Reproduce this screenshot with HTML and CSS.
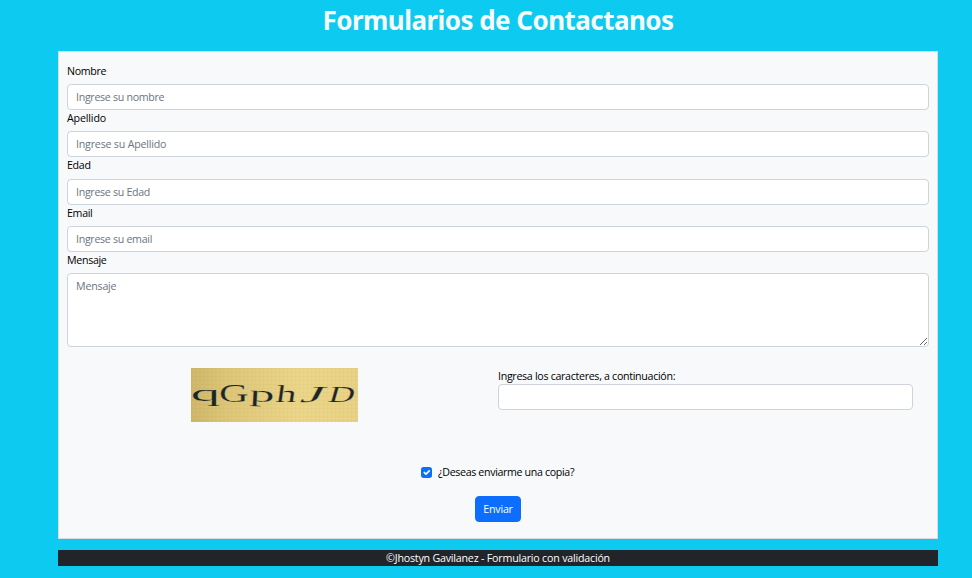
FILE: index.html
```html
<!DOCTYPE html>
<html lang="es">
<head>
<meta charset="utf-8">
<title>Formularios de Contactanos</title>
<link rel="stylesheet" href="styles.css">
</head>
<body>
<main class="container">
  <h1 class="title">Formularios de Contactanos</h1>
  <form class="card">
    <div class="field"><label for="nombre">Nombre</label><input class="control tight" id="nombre" type="text" placeholder="Ingrese su nombre"></div>
    <div class="field"><label for="apellido" class="wide">Apellido</label><input class="control" id="apellido" type="text" placeholder="Ingrese su Apellido"></div>
    <div class="field"><label for="edad">Edad</label><input class="control tight" id="edad" type="text" placeholder="Ingrese su Edad"></div>
    <div class="field"><label for="email">Email</label><input class="control tight" id="email" type="text" placeholder="Ingrese su email"></div>
    <div class="field"><label for="mensaje">Mensaje</label><textarea class="control message" id="mensaje" placeholder="Mensaje"></textarea></div>
    <div class="verify">
      <svg class="captcha" viewBox="0 0 167 54" role="img" aria-label="Captcha">
        <defs>
          <linearGradient id="paper"><stop offset="0" stop-color="#ceb568"/><stop offset=".2" stop-color="#dcc477"/><stop offset=".65" stop-color="#ead589"/><stop offset="1" stop-color="#e8d184"/></linearGradient>
          <pattern id="weave" width="4" height="4" patternUnits="userSpaceOnUse"><path d="M0 .5H4M.5 0V4" stroke="#b89a4c" stroke-opacity=".05"/><path d="M2 2.5H4" stroke="#fff0aa" stroke-opacity=".1"/></pattern>
        </defs>
        <rect width="167" height="54" fill="url(#paper)"/>
        <rect width="167" height="54" fill="url(#weave)"/>
        <g class="glyphs">
          <text transform="translate(-.5 33) scale(2.6 1)">q</text>
          <text transform="translate(28 34) scale(1.78 1.05)">G</text>
          <text transform="translate(58 33) rotate(3) scale(2.2 1)">p</text>
          <text transform="translate(84 34) skewX(-8) scale(1.8 1.05)">h</text>
          <text transform="translate(108 34) skewX(-28) scale(2.45 1)">J</text>
          <text transform="translate(136 34) skewX(-16) scale(1.56 1)">D</text>
        </g>
      </svg>
      <div class="answer tight"><label for="codigo">Ingresa los caracteres, a continuación:</label><input class="control" id="codigo" type="text"></div>
    </div>
    <div class="copy tight">
      <input class="check" id="copia" type="checkbox" checked>
      <svg class="tick" viewBox="0 0 20 20" aria-hidden="true"><path d="m6 10 3 3 6-6"/></svg>
      <label for="copia">¿Deseas enviarme una copia?</label>
    </div>
    <button class="send" type="button">Enviar</button>
  </form>
  <footer class="footer"><span>©Jhostyn Gavilanez - Formulario con validación</span></footer>
</main>
</body>
</html>
```
FILE: styles.css
```css
* { box-sizing: border-box; }
body { margin: 0; background: #0dcaf0; color: #000; font: 10.67px/16px "Open Sans", "Noto Sans", sans-serif; letter-spacing: -.2px; }
.container { width: 880px; margin-left: 58px; }
.title { height: 51px; margin: 0; padding-top: 4px; color: #f8f9fa; font: 700 26px/32px "Noto Sans", sans-serif; letter-spacing: -.54px; text-align: center; }
.card { display: block; height: 488px; padding: 10.67px 8px 0; background: #f8f9fb; border: 1px solid #d9dbe0; }
.field { height: 47.33px; }
.field:nth-child(5) { height: 95px; }
label { display: block; height: 16px; }
.field label { margin-bottom: 5.33px; letter-spacing: -.32px; }
.field .wide { letter-spacing: -.15px; }
.control { display: block; width: 100%; height: 26px; padding: 4px 8px; border: 1px solid #ced4da; border-radius: 4px; background: #fff; color: #212529; font: inherit; letter-spacing: inherit; }
.tight { letter-spacing: -.31px; }
.control::placeholder { color: #6c757d; opacity: 1; }
.message { height: 74px; resize: vertical; }
.verify { display: grid; grid-template-columns: 167px 415px; column-gap: 140px; margin: 21px 0 0 124px; align-items: start; }
.captcha { width: 167px; height: 54px; overflow: visible; }
.glyphs { fill: #1b2629; stroke: #dfc97c; stroke-width: .22; font: 23px "Liberation Serif", serif; letter-spacing: 0; }
.copy { position: relative; display: flex; width: 155px; height: 16px; margin: 42px auto 0 354px; align-items: center; gap: 6px; white-space: nowrap; }
.copy.tight { letter-spacing: -.35px; }
.check { appearance: none; width: 11px; height: 11px; margin: 1px 0 0; border-radius: 2.7px; background: #0d6efd; flex: none; }
.tick { position: absolute; left: 0; top: 3px; width: 11px; height: 11px; pointer-events: none; fill: none; stroke: #fff; stroke-width: 3; stroke-linecap: round; stroke-linejoin: round; }
.send { display: block; width: 46px; height: 26px; margin: 16px auto 0; padding: 0; border: 1px solid #0d6efd; border-radius: 4px; background: #0d6efd; color: #fff; font: inherit; letter-spacing: inherit; }
.footer { height: 16px; margin-top: 11px; background: #212529; color: #fff; text-align: center; }
```
